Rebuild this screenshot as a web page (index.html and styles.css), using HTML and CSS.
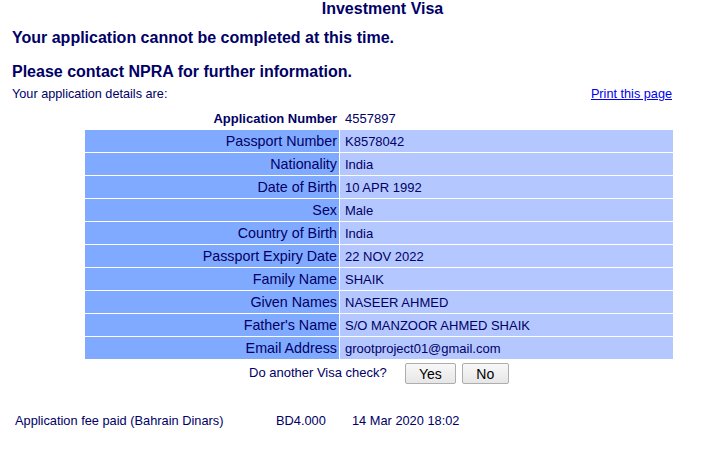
FILE: index.html
```html
<!DOCTYPE html>
<html>
<head>
<meta charset="utf-8">
<link rel="stylesheet" href="styles.css">
</head>
<body>
<div class="page">
  <div class="title">Investment Visa</div>
  <div class="msg msg1">Your application cannot be completed at this time.</div>
  <div class="msg msg2">Please contact NPRA for further information.</div>
  <div class="detailsbar">
    <span class="small">Your application details are:</span>
    <a href="#" class="print">Print this page</a>
  </div>
  <table class="details">
    <tr class="head"><td class="lab">Application Number</td><td class="val">4557897</td></tr>
    <tr><td class="lab">Passport Number</td><td class="val">K8578042</td></tr>
    <tr><td class="lab">Nationality</td><td class="val">India</td></tr>
    <tr><td class="lab">Date of Birth</td><td class="val">10 APR 1992</td></tr>
    <tr><td class="lab">Sex</td><td class="val">Male</td></tr>
    <tr><td class="lab">Country of Birth</td><td class="val">India</td></tr>
    <tr><td class="lab">Passport Expiry Date</td><td class="val">22 NOV 2022</td></tr>
    <tr><td class="lab">Family Name</td><td class="val">SHAIK</td></tr>
    <tr><td class="lab">Given Names</td><td class="val">NASEER AHMED</td></tr>
    <tr><td class="lab">Father's Name</td><td class="val">S/O MANZOOR AHMED SHAIK</td></tr>
    <tr><td class="lab">Email Address</td><td class="val">grootproject01@gmail.com</td></tr>
  </table>
  <div class="again">
    <span class="again-q">Do another Visa check?</span>
    <button class="btn btn-yes">Yes</button>
    <button class="btn btn-no">No</button>
  </div>
  <div class="fee">
    <span class="fee-label">Application fee paid (Bahrain Dinars)</span>
    <span class="fee-amt">BD4.000</span>
    <span class="fee-date">14 Mar 2020 18:02</span>
  </div>
</div>
</body>
</html>
```
FILE: styles.css
```css
html, body {
  margin: 0;
  padding: 0;
  background: #ffffff;
}
body {
  font-family: "Liberation Sans", Arial, sans-serif;
  color: #000066;
}
.page {
  width: 717px;
}
.title {
  font-weight: bold;
  font-size: 16px;
  line-height: 17px;
  text-align: center;
  padding-left: 48px;
}
.msg {
  font-weight: bold;
  font-size: 16px;
  line-height: 20px;
  padding-left: 12px;
}
.msg1 {
  margin-top: 11px;
}
.msg2 {
  margin-top: 14px;
}
.detailsbar {
  display: flex;
  justify-content: space-between;
  align-items: baseline;
  padding-left: 12px;
  width: 660px;
  margin-top: 5px;
}
.small {
  font-size: 12.7px;
  line-height: 15px;
}
.print {
  font-size: 12.7px;
  color: #0000ee;
  text-decoration: underline;
}
.details {
  border-collapse: separate;
  border-spacing: 1px;
  margin-left: 84px;
  width: 590px;
  margin-top: 4px;
}
.details td {
  height: 22px;
  box-sizing: border-box;
}
.details .lab {
  width: 254px;
  font-size: 14.3px;
  text-align: right;
  background: #80aaff;
  padding: 0 2px 0 3px;
}
.details .val {
  font-size: 13px;
  background: #b5c7ff;
  padding: 0 3px 0 5px;
}
.details .head td {
  background: transparent;
}
.details .head .lab {
  font-weight: bold;
  font-size: 13px;
}
.again {
  display: flex;
  align-items: center;
  margin-left: 249px;
  margin-top: 3px;
}
.again-q {
  font-size: 13px;
  margin-right: 18px;
  margin-top: -3px;
}
.btn {
  font-family: "Liberation Sans", Arial, sans-serif;
  font-size: 14px;
  color: #000000;
  background: linear-gradient(#f8f8f8, #e6e6e6);
  border: 1px solid #adadad;
  border-radius: 2px;
  height: 21px;
  padding: 0;
  margin: 0 6px 0 0;
}
.btn-yes {
  width: 51px;
}
.btn-no {
  width: 47px;
}
.fee {
  display: flex;
  font-size: 12.8px;
  margin-top: 29px;
  padding-left: 15px;
}
.fee-label {
  width: 261px;
}
.fee-amt {
  width: 76px;
}
```
